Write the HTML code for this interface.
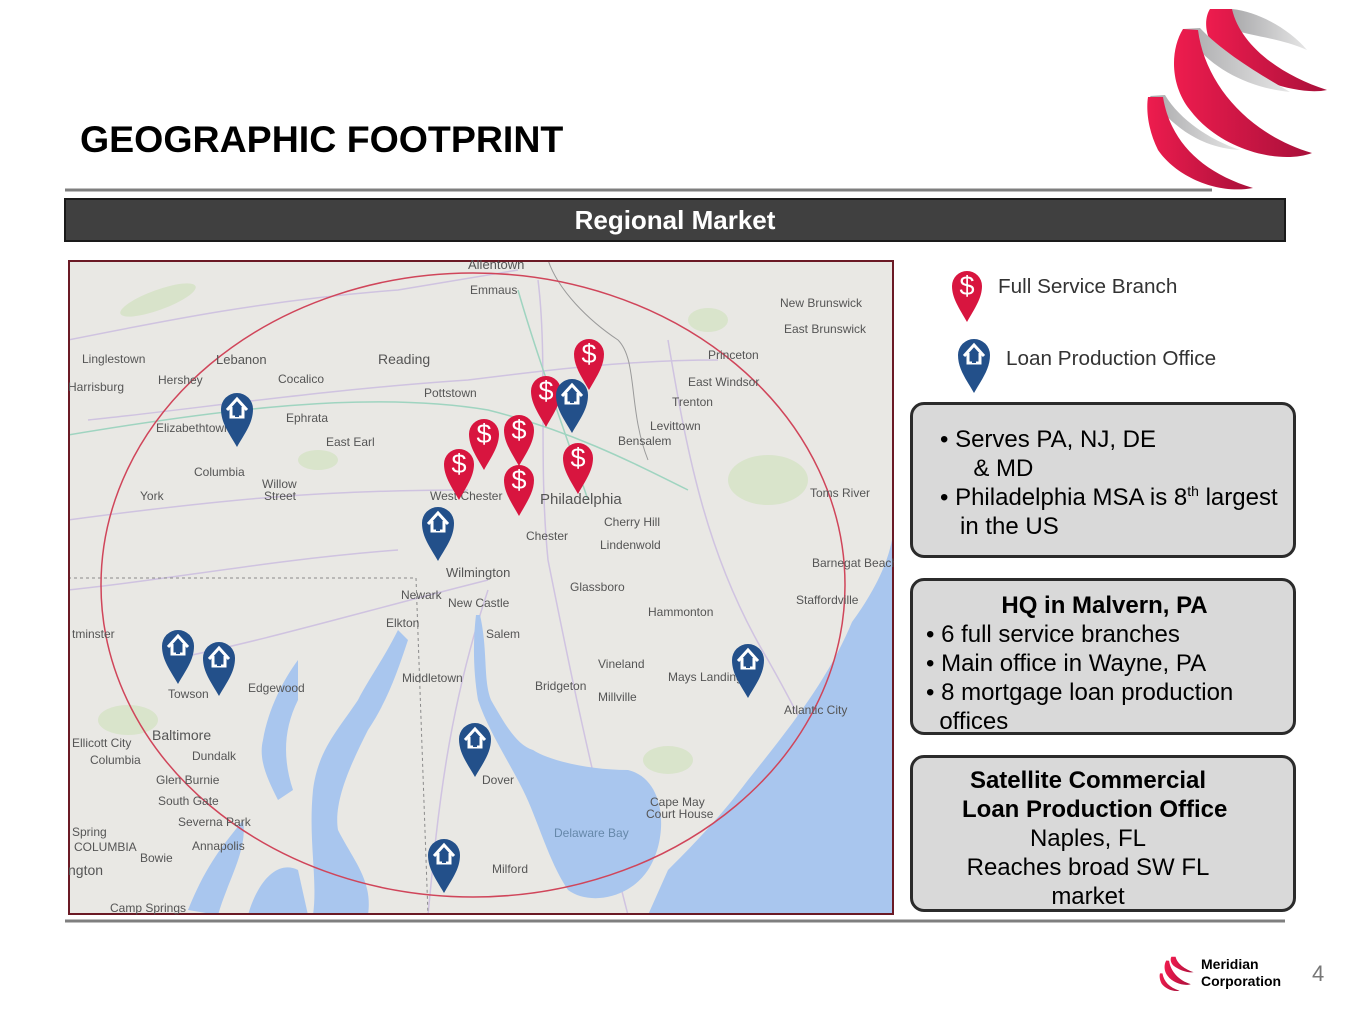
<!DOCTYPE html>
<html><head><meta charset="utf-8"><style>
body{margin:0;width:1365px;height:1024px;background:#fff;font-family:"Liberation Sans",Arial,sans-serif;position:relative;overflow:hidden}
.abs{position:absolute}
.box{position:absolute;background:#d9d9d9;border:3px solid #2b2b2b;border-radius:14px;box-sizing:border-box;font-size:24px;color:#000;line-height:29px;white-space:nowrap}
</style></head><body>
<svg class="abs" style="left:0;top:0" width="1365" height="1024">
<defs>
<linearGradient id="rg" x1="0" x2="1"><stop offset="0" stop-color="#ee1c4e"/><stop offset="1" stop-color="#a8103a"/></linearGradient>
<linearGradient id="gg" x1="0" x2="1"><stop offset="0" stop-color="#a9a9ab"/><stop offset="1" stop-color="#e6e6e6"/></linearGradient>
</defs>
<path d="M1232,9 C1260,12 1290,30 1307,50 C1280,38 1250,36 1235,30Z" fill="url(#gg)"/>
<path d="M1210,9 L1232,9 C1240,45 1280,75 1327,90 C1300,96 1250,80 1220,55 C1205,40 1203,20 1210,9Z" fill="url(#rg)"/>
<path d="M1183,29 L1200,28 C1225,55 1270,80 1290,92 C1250,88 1215,70 1195,45Z" fill="url(#gg)"/>
<path d="M1183,29 L1198,30 C1205,85 1250,135 1312,153 C1280,165 1220,150 1190,110 C1170,85 1170,50 1183,29Z" fill="url(#rg)"/>
<path d="M1150,96 L1165,95 C1180,120 1210,140 1240,150 C1200,148 1170,125 1150,96Z" fill="url(#gg)"/>
<path d="M1148,97 L1163,97 C1170,140 1200,172 1253,188 C1215,195 1175,175 1158,150 C1148,130 1146,110 1148,97Z" fill="url(#rg)"/>
<line x1="65" y1="190" x2="1212" y2="190" stroke="#7f7f7f" stroke-width="3"/>
<line x1="65" y1="921" x2="1285" y2="921" stroke="#7f7f7f" stroke-width="3"/>
<g transform="translate(1160,955) scale(0.19)">
<path d="M60,9 L82,9 C90,45 130,75 177,90 C150,96 100,80 70,55 C55,40 53,20 60,9Z" fill="url(#rg)"/>
<path d="M33,29 L48,30 C55,85 100,135 162,153 C130,165 70,150 40,110 C20,85 20,50 33,29Z" fill="url(#rg)"/>
<path d="M0,97 L13,97 C20,140 50,172 103,188 C65,195 25,175 8,150 C-2,130 -4,110 0,97Z" fill="url(#rg)"/>
</g>
</svg>
<div class="abs" style="left:80px;top:118px;font-size:37.5px;font-weight:bold;color:#000">GEOGRAPHIC FOOTPRINT</div>
<div class="abs" style="left:64px;top:198px;width:1222px;height:44px;box-sizing:border-box;background:#404040;border:2px solid #1a1a1a;color:#fff;font-weight:bold;font-size:26px;text-align:center;line-height:40px">Regional Market</div>
<svg class="abs" style="left:68px;top:260px" width="826" height="655">
<rect x="0" y="0" width="826" height="655" fill="#e9e8e4"/>
<g fill="#d5e2c4" opacity="0.8">
<ellipse cx="90" cy="40" rx="40" ry="10" transform="rotate(-20 90 40)"/><ellipse cx="640" cy="60" rx="20" ry="12"/><ellipse cx="700" cy="220" rx="40" ry="25"/><ellipse cx="600" cy="500" rx="25" ry="14"/><ellipse cx="60" cy="460" rx="30" ry="15"/><ellipse cx="250" cy="200" rx="20" ry="10"/>
</g>
<g fill="none" stroke="#cdbfe0" stroke-width="1.5" opacity="0.9">
<path d="M0,80 C100,60 200,40 330,30 L450,10"/><path d="M20,160 C120,150 250,130 400,120 C480,110 560,100 650,100"/><path d="M0,260 C150,240 250,230 400,230"/><path d="M470,20 C480,100 470,200 480,300 C500,400 520,500 560,655"/><path d="M600,80 C620,200 640,300 700,400 C740,470 760,520 790,560"/><path d="M100,400 C200,380 300,350 420,320"/><path d="M0,330 C100,320 200,300 330,290"/><path d="M360,655 C370,550 380,450 420,330"/>
</g>
<g fill="none" stroke="#9fd4c0" stroke-width="1.5"><path d="M0,175 C150,150 300,130 420,150 C500,170 560,200 620,230"/><path d="M450,30 C470,100 500,180 520,240"/></g>
<g fill="#a9c6ee">
<path d="M845,0 L826,0 L826,90 C840,80 846,40 845,0Z"/>
<path d="M826,260 C826,300 800,340 784,362 C760,420 720,470 680,520 C650,560 620,590 600,610 L580,655 L826,655Z"/>
<path d="M412,355 C420,390 415,420 423,440 C440,470 450,485 465,490 C480,500 520,510 560,510 C600,520 600,580 580,610 C560,640 520,645 500,630 C480,600 470,560 455,530 C440,500 420,470 410,440 C405,410 405,380 408,355Z"/>
<path d="M330,370 C315,400 300,420 290,440 C270,470 250,490 245,530 C240,580 250,620 245,655 L300,655 C305,620 285,600 270,570 C265,540 285,500 300,470 C320,440 330,410 340,380Z"/>
<path d="M230,400 C215,420 200,450 195,480 C190,500 200,520 210,540 L225,530 C215,500 215,470 230,440Z"/>
<path d="M180,655 C190,620 210,600 230,610 L240,655Z"/>
<path d="M120,650 C140,600 160,580 175,560 C180,590 160,620 150,655Z"/>
</g>
<path d="M0,318 L348,318 L360,655" fill="none" stroke="#8a8a8a" stroke-dasharray="3,3"/>
<path d="M880,0 C890,30 920,60 950,80 C970,100 960,150 980,200" fill="none" stroke="#9a9a9a" transform="translate(-400,0)"/>
<ellipse cx="405" cy="325" rx="372" ry="312" fill="none" stroke="#d0455a" stroke-width="1.5"/>
<rect x="1" y="1" width="824" height="653" fill="none" stroke="#6b1a25" stroke-width="2"/>
<g font-size="12" fill="#555" font-family="Liberation Sans">
<text x="400" y="9" font-size="13">Allentown</text><text x="402" y="34">Emmaus</text><text x="712" y="47">New Brunswick</text><text x="716" y="73">East Brunswick</text><text x="310" y="104" font-size="14">Reading</text><text x="640" y="99">Princeton</text><text x="620" y="126">East Windsor</text><text x="604" y="146">Trenton</text><text x="582" y="170">Levittown</text><text x="550" y="185">Bensalem</text><text x="0" y="131">Harrisburg</text><text x="14" y="103">Linglestown</text><text x="148" y="104" font-size="13">Lebanon</text><text x="90" y="124">Hershey</text><text x="210" y="123">Cocalico</text><text x="218" y="162">Ephrata</text><text x="258" y="186">East Earl</text><text x="356" y="137">Pottstown</text><text x="88" y="172">Elizabethtown</text><text x="126" y="216">Columbia</text><text x="194" y="228">Willow</text><text x="196" y="240">Street</text><text x="72" y="240">York</text><text x="362" y="240">West Chester</text><text x="472" y="244" font-size="15">Philadelphia</text><text x="536" y="266">Cherry Hill</text><text x="458" y="280">Chester</text><text x="532" y="289">Lindenwold</text><text x="742" y="237">Toms River</text><text x="744" y="307">Barnegat Beach</text><text x="378" y="317" font-size="13">Wilmington</text><text x="333" y="339">Newark</text><text x="380" y="347">New Castle</text><text x="502" y="331">Glassboro</text><text x="728" y="344">Staffordville</text><text x="580" y="356">Hammonton</text><text x="318" y="367">Elkton</text><text x="418" y="378">Salem</text><text x="530" y="408">Vineland</text><text x="600" y="421">Mays Landing</text><text x="334" y="422">Middletown</text><text x="467" y="430">Bridgeton</text><text x="530" y="441">Millville</text><text x="716" y="454">Atlantic City</text><text x="4" y="378">tminster</text><text x="100" y="438">Towson</text><text x="180" y="432">Edgewood</text><text x="84" y="480" font-size="14">Baltimore</text><text x="4" y="487">Ellicott City</text><text x="22" y="504">Columbia</text><text x="124" y="500">Dundalk</text><text x="88" y="524">Glen Burnie</text><text x="90" y="545">South Gate</text><text x="110" y="566">Severna Park</text><text x="124" y="590">Annapolis</text><text x="4" y="576">Spring</text><text x="6" y="591">COLUMBIA</text><text x="72" y="602">Bowie</text><text x="0" y="615" font-size="14">ngton</text><text x="42" y="652">Camp Springs</text><text x="414" y="524">Dover</text><text x="424" y="613">Milford</text><text x="582" y="546">Cape May</text><text x="578" y="558">Court House</text><text x="486" y="577" fill="#6688aa">Delaware Bay</text>
</g>
</svg>
<svg class="abs" style="left:0;top:0;pointer-events:none" width="1365" height="1024">
<defs>
<g id="rp"><path d="M0,0 C-8,-14 -15,-24 -15,-36 A15,15 0 1 1 15,-36 C15,-24 8,-14 0,0Z" fill="#d8153f"/><text x="0" y="-27" font-size="27" fill="#fff" text-anchor="middle" font-family="Liberation Sans">$</text></g>
<g id="bp"><path d="M0,0 C-8,-14 -16,-24 -16,-38 A16,16 0 1 1 16,-38 C16,-24 8,-14 0,0Z" fill="#23508a"/><path d="M-10,-37 L0,-48 L10,-37 M-6,-40 V-30 H6 V-40" fill="none" stroke="#fff" stroke-width="3"/><rect x="-2" y="-35" width="4" height="5" fill="#23508a"/></g>
</defs>
<use href="#rp" x="589" y="390"/><use href="#rp" x="546" y="427"/><use href="#rp" x="484" y="470"/><use href="#rp" x="519" y="466"/><use href="#rp" x="459" y="500"/><use href="#rp" x="519" y="516"/><use href="#rp" x="578" y="494"/>
<use href="#bp" x="237" y="447"/><use href="#bp" x="572" y="433"/><use href="#bp" x="438" y="561"/><use href="#bp" x="178" y="684"/><use href="#bp" x="219" y="696"/><use href="#bp" x="748" y="698"/><use href="#bp" x="475" y="777"/><use href="#bp" x="444" y="893"/>
<use href="#rp" x="967" y="322"/><use href="#bp" x="974" y="393"/>
</svg>
<div class="abs" style="left:998px;top:275px;font-size:20.7px;color:#333">Full Service Branch</div>
<div class="abs" style="left:1006px;top:347px;font-size:20.7px;color:#333">Loan Production Office</div>
<div class="box" style="left:910px;top:402px;width:386px;height:156px;padding:20px 0 0 27px">• Serves PA, NJ, DE<br>&nbsp;&nbsp;&nbsp;&nbsp;&nbsp;&amp; MD<br>• Philadelphia MSA is 8<sup style="font-size:14px;line-height:0">th</sup> largest<br>&nbsp;&nbsp;&nbsp;in the US</div>
<div class="box" style="left:910px;top:578px;width:386px;height:157px;padding:10px 0 0 13px"><div style="text-align:center;font-weight:bold;padding-right:10px">HQ in Malvern, PA</div>• 6 full service branches<br>• Main office in Wayne, PA<br>• 8 mortgage loan production<br>&nbsp;&nbsp;offices</div>
<div class="box" style="left:910px;top:755px;width:386px;height:157px;padding:8px 30px 0 0;text-align:center"><b>Satellite Commercial<br>&nbsp;&nbsp;Loan Production Office</b><br>Naples, FL<br>Reaches broad SW FL<br>market</div>
<div class="abs" style="left:1201px;top:956px;font-size:14px;font-weight:bold;line-height:17px">Meridian<br>Corporation</div>
<div class="abs" style="left:1312px;top:961px;font-size:22px;color:#777">4</div>
</body></html>
